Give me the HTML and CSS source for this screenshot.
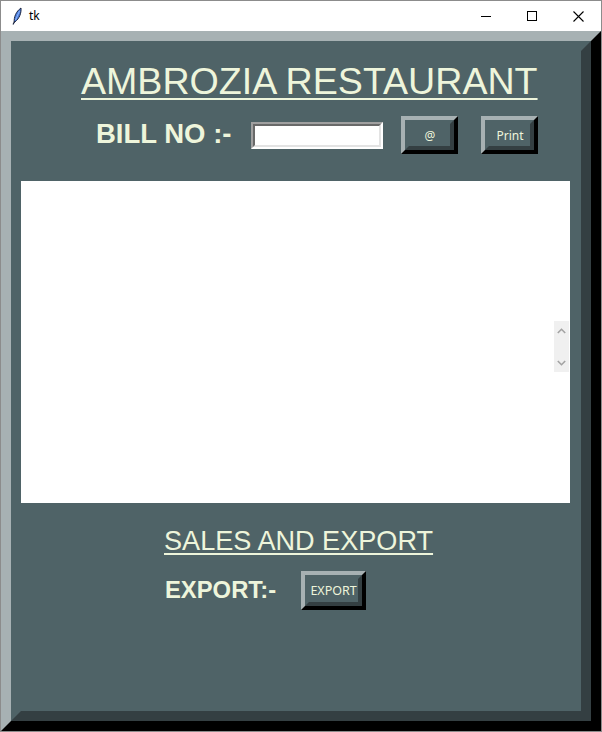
FILE: index.html
```html
<!DOCTYPE html>
<html>
<head>
<meta charset="utf-8">
<link rel="stylesheet" href="styles.css">
</head>
<body>
<div class="window">
  <div class="titlebar">
    <svg class="feather" width="10" height="18" viewBox="0 0 10 18">
      <path d="M2.2 15.5 C1.8 10 4 4.5 9 1 C9.4 6 7.5 11.5 3 14.8 Z" fill="#4a7fe0" stroke="#1c2540" stroke-width="1"/>
      <path d="M3.5 13 L7.5 4" stroke="#9fc0ff" stroke-width="0.8" fill="none"/>
      <path d="M2.6 14.5 L1 17.5" stroke="#1c2540" stroke-width="1.2" fill="none"/>
    </svg>
    <span class="title">tk</span>
    <div class="controls">
      <div class="ctl"><svg width="10" height="10" viewBox="0 0 10 10"><path d="M0 5.5 H10" stroke="#000" stroke-width="1"/></svg></div>
      <div class="ctl"><svg width="10" height="10" viewBox="0 0 10 10"><rect x="0.5" y="0.5" width="9" height="9" fill="none" stroke="#000" stroke-width="1"/></svg></div>
      <div class="ctl"><svg width="11" height="11" viewBox="0 0 11 11"><path d="M0.5 0.5 L10.5 10.5 M10.5 0.5 L0.5 10.5" stroke="#000" stroke-width="1.1"/></svg></div>
    </div>
  </div>
  <div class="frame-outer">
    <div class="frame-inner">
      <div class="heading">AMBROZIA RESTAURANT</div>
      <div class="bill-row">
        <span class="bill-label">BILL NO :-</span>
        <div class="entry"><div class="entry-in"></div></div>
        <div class="btn btn-at"><div class="btn-in">@</div></div>
        <div class="btn btn-print"><div class="btn-in">Print</div></div>
      </div>
      <div class="textbox">
        <div class="scrollbar">
          <svg width="9" height="6" viewBox="0 0 9 6"><path d="M0.8 5 L4.5 1.3 L8.2 5" fill="none" stroke="#a3a3a3" stroke-width="1.6"/></svg>
          <svg width="9" height="6" viewBox="0 0 9 6"><path d="M0.8 1 L4.5 4.7 L8.2 1" fill="none" stroke="#a3a3a3" stroke-width="1.6"/></svg>
        </div>
      </div>
      <div class="sales">SALES AND EXPORT</div>
      <div class="export-row">
        <span class="export-label">EXPORT:-</span>
        <div class="btn btn-export"><div class="btn-in">EXPORT</div></div>
      </div>
    </div>
  </div>
</div>
</body>
</html>
```
FILE: styles.css
```css
* { box-sizing: border-box; }
html, body { margin: 0; padding: 0; }
body {
  width: 602px;
  height: 732px;
  overflow: hidden;
  background: #fff;
  font-family: "Liberation Sans", Arial, sans-serif;
}
.window {
  width: 602px;
  height: 732px;
  border: 1px solid #8c8c8c;
  display: flex;
  flex-direction: column;
  background: #fff;
}
.titlebar {
  flex: none;
  height: 30px;
  display: flex;
  align-items: center;
  background: #fff;
}
.feather {
  margin-left: 11px;
  flex: none;
}
.title {
  margin-left: 7px;
  font-family: "Noto Sans", "Open Sans", sans-serif;
  font-size: 12px;
  color: #000;
  margin-top: -1px;
}
.controls {
  margin-left: auto;
  display: flex;
  height: 30px;
}
.ctl {
  width: 46px;
  height: 30px;
  display: flex;
  align-items: center;
  justify-content: center;
}
.frame-outer {
  flex: none;
  width: 600px;
  height: 700px;
  border: 10px solid;
  border-color: #a7b1b3 #000 #000 #a7b1b3;
}
.frame-inner {
  width: 100%;
  height: 100%;
  border: 10px solid;
  border-color: #4f6367 #343f42 #343f42 #4f6367;
  background: #4f6367;
  color: #eef5db;
}
.heading {
  margin-top: 12px;
  padding-left: 60px;
  font-size: 37.6px;
  line-height: 37px;
  text-decoration: underline;
  text-decoration-thickness: 2px;
  text-underline-offset: 4px;
  white-space: nowrap;
}
.bill-row {
  margin-top: 16px;
  height: 38px;
  display: flex;
  align-items: center;
}
.bill-label {
  margin-left: 75px;
  font-weight: bold;
  font-size: 27.5px;
  line-height: 30px;
  margin-bottom: 2px;
  white-space: nowrap;
}
.entry {
  margin-left: 20px;
  width: 132px;
  height: 27px;
  border: 2px solid;
  border-color: #a0a0a0 #ffffff #ffffff #a0a0a0;
}
.entry-in {
  width: 100%;
  height: 100%;
  border: 2px solid;
  border-color: #696969 #e3e3e3 #e3e3e3 #696969;
  background: #fff;
}
.btn {
  border: 4px solid;
  border-color: #a7b1b3 #000 #000 #a7b1b3;
  background: #4f6367;
}
.btn-in {
  width: 100%;
  height: 100%;
  border: 4px solid;
  border-color: #4f6367 #343f42 #343f42 #4f6367;
  display: flex;
  align-items: center;
  justify-content: center;
  font-family: "Noto Sans", "Open Sans", sans-serif;
  font-size: 12px;
  color: #eef5db;
  white-space: nowrap;
}
.btn-at {
  margin-left: 18px;
  width: 57px;
  height: 38px;
}
.btn-print {
  margin-left: 23px;
  width: 57px;
  height: 38px;
}
.textbox {
  margin-top: 27px;
  width: 549px;
  height: 322px;
  background: #fff;
  position: relative;
}
.scrollbar {
  position: absolute;
  right: 1px;
  top: 140px;
  width: 15px;
  height: 51px;
  background: #f0f0f0;
  display: flex;
  flex-direction: column;
  align-items: center;
  justify-content: space-between;
  padding: 7px 0 6px;
}
.scrollbar svg { display: block; }
.sales {
  margin-top: 24px;
  padding-left: 143px;
  font-size: 27.1px;
  line-height: 27px;
  text-decoration: underline;
  text-decoration-thickness: 2px;
  text-underline-offset: 3px;
  white-space: nowrap;
}
.export-row {
  margin-top: 17px;
  height: 39px;
  display: flex;
  align-items: center;
}
.export-label {
  margin-left: 144px;
  font-weight: bold;
  font-size: 23.8px;
  line-height: 26px;
  margin-bottom: 2px;
  white-space: nowrap;
}
.btn-export {
  margin-left: 25px;
  width: 65px;
  height: 39px;
}
.btn-export .btn-in {
  font-size: 12.5px;
}
```
